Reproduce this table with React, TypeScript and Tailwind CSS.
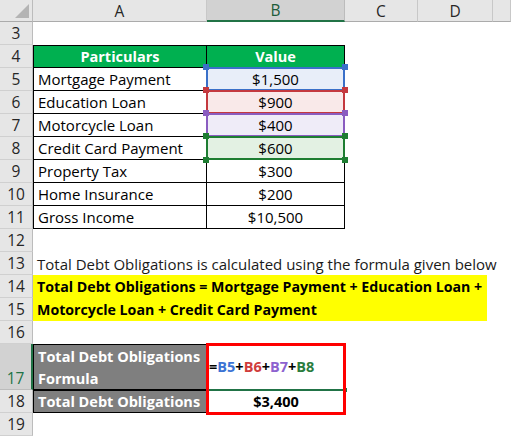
import type { ReactNode } from "react";

const font = { fontFamily: '"Open Sans", "Noto Sans", sans-serif' };

const cols = ["A", "B", "C", "D", ""];

const items = [
  { label: "Mortgage Payment", value: "$1,500" },
  { label: "Education Loan", value: "$900" },
  { label: "Motorcycle Loan", value: "$400" },
  { label: "Credit Card Payment", value: "$600" },
  { label: "Property Tax", value: "$300" },
  { label: "Home Insurance", value: "$200" },
  { label: "Gross Income", value: "$10,500" },
];

// colour-coded reference highlight for B5..B8
const refs = [
  { fill: "bg-[#e8eef9]", line: "border-[#3a70c9]", dot: "bg-[#3a70c9]" },
  { fill: "bg-[#f9e9e9]", line: "border-[#c4393f]", dot: "bg-[#c4393f]" },
  { fill: "bg-[#efecf8]", line: "border-[#8a5cc0]", dot: "bg-[#8a5cc0]" },
  { fill: "bg-[#e3f1e3]", line: "border-[#1e7d32]", dot: "bg-[#1e7d32]" },
];

function RowHead({ n, active }: { n: number | string; active?: boolean }) {
  return (
    <div
      className={
        active
          ? "flex items-end justify-center bg-[#d2d2d2] border-r-2 border-r-[#217346] border-b border-b-[#bcbcbc] text-[#217346] text-[15.5px] leading-[20px] pb-[1px]"
          : "flex items-center justify-center bg-[#e6e6e6] border-r border-r-[#bcbcbc] border-b border-b-[#d0d0d0] text-[#262626] text-[15.5px] leading-[20px]"
      }
    >
      {n}
    </div>
  );
}

function Blank() {
  return <div className="col-span-5" />;
}

function Corner({ dot, pos }: { dot: string; pos: string }) {
  return <span className={`absolute h-[6px] w-[6px] ${dot} ${pos}`} />;
}

function RefCell({ value, i }: { value: string; i: number }) {
  const r = refs[i];
  return (
    <div className="relative border-r border-b border-black">
      <div className={`absolute inset-[-1px] border-2 ${r.fill} ${r.line} flex items-center justify-center`}>
        {value}
      </div>
      <Corner dot={r.dot} pos="left-[-4px] top-[-4px]" />
      <Corner dot={r.dot} pos="right-[-4px] top-[-4px]" />
      {i === 3 && (
        <>
          <Corner dot={r.dot} pos="left-[-4px] bottom-[-4px]" />
          <Corner dot={r.dot} pos="right-[-4px] bottom-[-4px]" />
        </>
      )}
    </div>
  );
}

function Cell({ children, className = "" }: { children?: ReactNode; className?: string }) {
  return <div className={`flex items-center leading-[20px] ${className}`}>{children}</div>;
}

export default function App() {
  return (
    <div className="h-[439px] w-[511px] overflow-hidden bg-white text-[15px] text-black" style={font}>
      <div className="grid grid-cols-[33px_174px_138px_73px_75px_18px] grid-rows-[22px_repeat(14,23px)_46px_23px_23px_23px]">
        {/* column headers */}
        <div className="relative bg-[#e6e6e6] border-r border-r-[#bcbcbc] border-b border-b-[#ababab]">
          <svg className="absolute right-[3px] bottom-[3px]" width="14" height="14" viewBox="0 0 14 14">
            <polygon points="14,0 14,14 0,14" fill="#b4b4b4" />
          </svg>
        </div>
        {cols.map((c) =>
          c === "B" ? (
            <div key={c} className="flex items-center justify-center bg-[#d2d2d2] border-r border-r-[#bcbcbc] border-b-2 border-b-[#217346] text-[#1d5c3a] text-[15.5px] leading-[18px]">
              {c}
            </div>
          ) : (
            <div key={c || "e"} className="flex items-center justify-center bg-[#e6e6e6] border-r border-r-[#c8c8c8] border-b border-b-[#ababab] text-[#262626] text-[15.5px] leading-[18px]">
              {c}
            </div>
          )
        )}

        {/* row 3 */}
        <RowHead n={3} />
        <Blank />

        {/* row 4 header */}
        <RowHead n={4} />
        <Cell className="justify-center bg-[#00b050] border border-black font-bold text-[14.5px] text-white">Particulars</Cell>
        <Cell className="justify-center bg-[#00b050] border-y border-r border-black font-bold text-[14.5px] text-white">Value</Cell>
        <div className="col-span-3" />

        {/* rows 5..11 */}
        {items.map((it, i) => (
          <div key={it.label} className="contents">
            <RowHead n={5 + i} />
            <Cell className="pl-[4px] border-x border-b border-black whitespace-nowrap">{it.label}</Cell>
            {i < 4 ? (
              <RefCell value={it.value} i={i} />
            ) : (
              <Cell className="justify-center border-r border-b border-black">{it.value}</Cell>
            )}
            <div className="col-span-3" />
          </div>
        ))}

        {/* row 12 */}
        <RowHead n={12} />
        <Blank />

        {/* row 13 */}
        <RowHead n={13} />
        <Cell className="col-span-5 pl-[4px] whitespace-nowrap text-[#1a1a1a]">
          Total Debt Obligations is calculated using the formula given below
        </Cell>

        {/* rows 14-15 */}
        <RowHead n={14} />
        <div className="col-span-5 row-span-2">
          <div className="h-full w-[454px] bg-[#ffff00] pl-[4px] text-[14.2px] font-bold leading-[23px] whitespace-nowrap">
            <div>Total Debt Obligations = Mortgage Payment + Education Loan +</div>
            <div>Motorcycle Loan + Credit Card Payment</div>
          </div>
        </div>
        <RowHead n={15} />

        {/* row 16 */}
        <RowHead n={16} />
        <Blank />

        {/* row 17 */}
        <RowHead n={17} active />
        <div className="bg-[#7f7f7f] border-y border-l border-black pl-[4px] pt-[1px] text-[14.5px] font-bold text-white leading-[22px]">
          <div>Total Debt Obligations</div>
          <div>Formula</div>
        </div>
        <div className="relative flex items-center pl-[2px] text-[14.5px] font-bold">
          <span>=</span>
          <span className="text-[#3b73d4]">B5</span>
          <span>+</span>
          <span className="text-[#d03c3c]">B6</span>
          <span>+</span>
          <span className="text-[#8d62cf]">B7</span>
          <span>+</span>
          <span className="text-[#2a7d3e]">B8</span>
          <span className="absolute left-0 right-[1px] bottom-[-1px] h-[2px] bg-[#217346]" />
          <span className="absolute right-[-2px] bottom-[-2px] h-[4px] w-[4px] bg-[#217346]" />
          <span className="absolute left-[-1px] top-[-1px] z-10 h-[72px] w-[140px] border-[3px] border-[#ff0000] pointer-events-none" />
        </div>
        <div className="col-span-3" />

        {/* row 18 */}
        <RowHead n={18} />
        <Cell className="bg-[#7f7f7f] border border-black pl-[4px] text-[14.5px] font-bold text-white whitespace-nowrap">
          Total Debt Obligations
        </Cell>
        <Cell className="justify-center text-[14.5px] font-bold">$3,400</Cell>
        <div className="col-span-3" />

        {/* row 19 */}
        <RowHead n={19} />
        <Blank />
      </div>
    </div>
  );
}
